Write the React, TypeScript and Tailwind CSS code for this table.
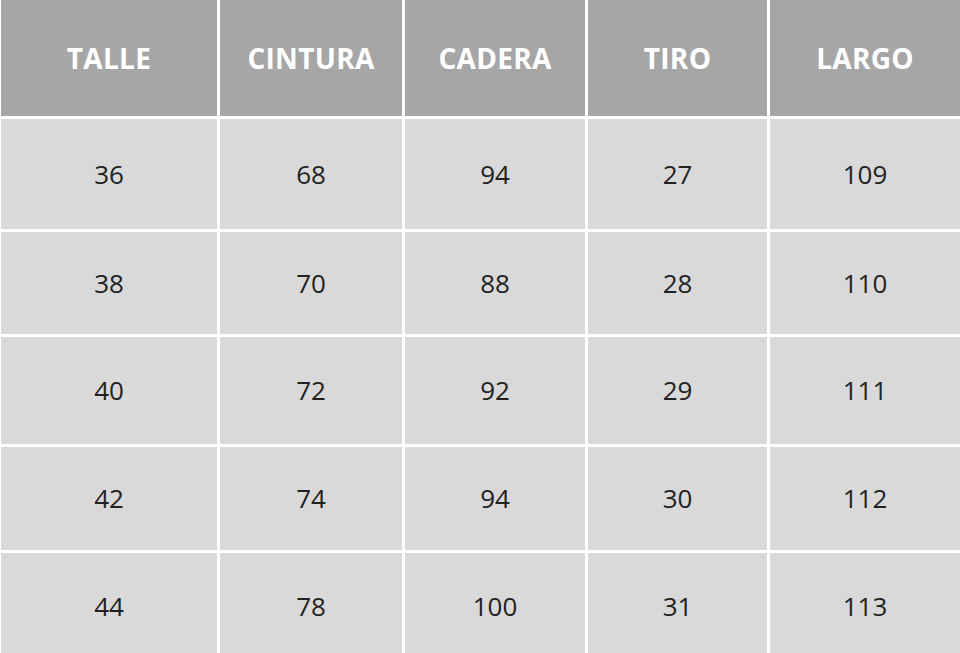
import React from "react";

const headers = ["TALLE", "CINTURA", "CADERA", "TIRO", "LARGO"];
const rows = [
  ["36", "68", "94", "27", "109"],
  ["38", "70", "88", "28", "110"],
  ["40", "72", "92", "29", "111"],
  ["42", "74", "94", "30", "112"],
  ["44", "78", "100", "31", "113"],
];

export default function App() {
  return (
    <div className="w-[960px] h-[653px] overflow-hidden bg-white pl-[1px]" style={{ fontFamily: '"Open Sans", sans-serif' }}>
      <div className="grid grid-cols-[216px_182px_180px_179px_1fr] grid-rows-[116px_110px_102px_107px_103px_106px] gap-[3px]">
        {headers.map((h) => (
          <div key={h} className="bg-[#a6a6a6] flex items-center justify-center text-white font-bold text-[28px] tracking-[0.3px]">
            {h}
          </div>
        ))}
        {rows.map((r, i) =>
          r.map((c, j) => (
            <div key={`${i}-${j}`} className="bg-[#d9d9d9] flex items-center justify-center text-[#222222] text-[26px]">
              {c}
            </div>
          ))
        )}
      </div>
    </div>
  );
}
